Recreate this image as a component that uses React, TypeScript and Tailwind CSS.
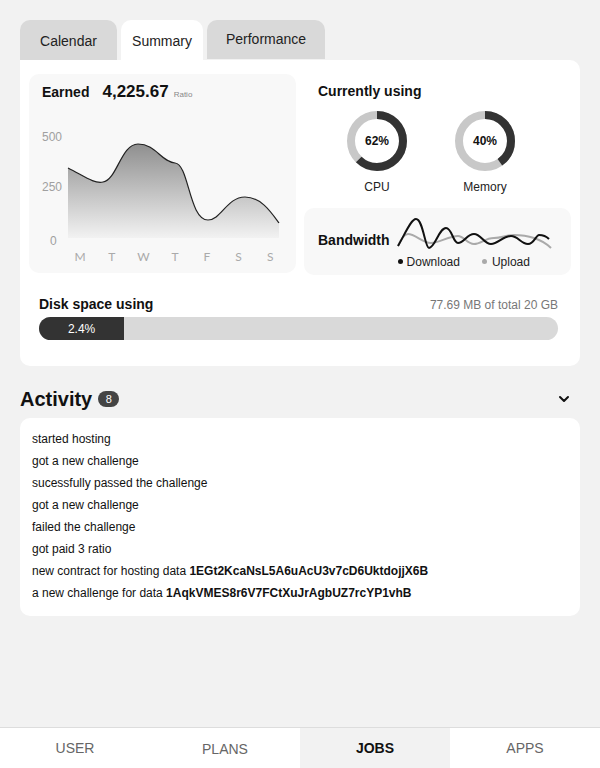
import React from 'react';
import { ChevronDown } from 'lucide-react';

const activity: { text: string; id?: string }[] = [
  { text: 'started hosting' },
  { text: 'got a new challenge' },
  { text: 'sucessfully passed the challenge' },
  { text: 'got a new challenge' },
  { text: 'failed the challenge' },
  { text: 'got paid 3 ratio' },
  { text: 'new contract for hosting data', id: '1EGt2KcaNsL5A6uAcU3v7cD6UktdojjX6B' },
  { text: 'a new challenge for data', id: '1AqkVMES8r6V7FCtXuJrAgbUZ7rcYP1vhB' },
];

const Donut = ({ value, label }: { value: number; label: string }) => {
  const r = 26;
  const c = 2 * Math.PI * r;
  return (
    <div className="w-[80px] flex flex-col items-center">
      <div className="relative w-[62px] h-[62px]">
        <svg width="62" height="62" viewBox="0 0 62 62" className="-rotate-90">
          <circle cx="31" cy="31" r={r} fill="none" stroke="#c8c8c8" strokeWidth="8" />
          <circle
            cx="31"
            cy="31"
            r={r}
            fill="none"
            stroke="#333333"
            strokeWidth="8"
            strokeDasharray={`${(c * value) / 100} ${c}`}
          />
        </svg>
        <div className="absolute inset-0 flex items-center justify-center text-[12px] font-bold text-[#111]">
          {value}%
        </div>
      </div>
      <div className="mt-[9px] text-[12px] leading-none text-[#222]">{label}</div>
    </div>
  );
};

const EarnedChart = () => (
  <svg width="267" height="169" viewBox="0 0 267 169" className="block">
    <defs>
      <linearGradient id="earnFill" x1="0" y1="0" x2="0" y2="1">
        <stop offset="0%" stopColor="#8f8f8f" />
        <stop offset="100%" stopColor="#f2f2f2" />
      </linearGradient>
    </defs>
    <g fontFamily="'Liberation Sans', Arial, sans-serif" fontSize="12" fill="#a0a0a0">
      <text x="13" y="37">500</text>
      <text x="13" y="87">250</text>
      <text x="21" y="141">0</text>
    </g>
    <path
      d="M39,64 C55,72 65,80 74,78 C88,76 92,40 109,40 C127,40 132,58 146,59 C160,60 160,116 179,116 C192,116 198,93 216,93 C232,93 242,108 250,119 L250,134 L39,134 Z"
      fill="url(#earnFill)"
    />
    <path
      d="M39,64 C55,72 65,80 74,78 C88,76 92,40 109,40 C127,40 132,58 146,59 C160,60 160,116 179,116 C192,116 198,93 216,93 C232,93 242,108 250,119"
      fill="none"
      stroke="#222"
      strokeWidth="1.2"
    />
    <g fontFamily="Lato, 'Open Sans', sans-serif" fontSize="12" fill="#aaa" textAnchor="middle">
      {['M', 'T', 'W', 'T', 'F', 'S', 'S'].map((d, i) => (
        <text key={i} x={51 + i * 31.7} y="157">
          {d}
        </text>
      ))}
    </g>
  </svg>
);

const Waves = () => (
  <svg width="156" height="40" viewBox="0 0 156 40" className="block">
    <path
      d="M1,32 C4,25 7,20 11,20 C18,20 26,29 34,29 C42,29 52,22 61,22 C67,22 70,30 77,30 C84,30 88,24 97,24 C105,24 109,21 117,21 C126,21 131,22 137,24 C143,26 150,30 154,34"
      fill="none"
      stroke="#aaaaaa"
      strokeWidth="2"
    />
    <path
      d="M1,32 C8,20 14,5 19,5 C26,5 28,34 32,34 C38,34 42,14 49,14 C55,14 56,29 61,29 C67,29 70,20 77,20 C84,20 87,30 94,30 C101,30 106,22 114,22 C121,22 124,30 131,30 C137,30 139,21 142,21 C147,21 150,23 152,25"
      fill="none"
      stroke="#111"
      strokeWidth="2"
    />
  </svg>
);

const App = () => {
  return (
    <div className="h-screen w-full flex flex-col bg-[#f2f2f2] font-['Liberation_Sans',Arial,sans-serif] text-[#111]">
      <div className="px-5 pt-5">
        {/* tabs */}
        <div className="flex gap-1 text-[14px] text-[#222]">
          <div className="w-[97px] h-10 rounded-t-[10px] bg-[#d9d9d9] flex items-center justify-center pt-[2px]">Calendar</div>
          <div className="w-[82px] h-10 rounded-t-[10px] bg-white flex items-center justify-center pt-[2px]">Summary</div>
          <div className="w-[118px] h-[39px] rounded-t-[10px] bg-[#d9d9d9] flex items-center justify-center">Performance</div>
        </div>

        {/* summary card */}
        <div className="bg-white rounded-b-[10px] rounded-tr-[10px] pt-[14px] pb-[26px]">
          <div className="grid grid-cols-2 gap-2 px-[9px]">
            <div className="bg-[#f8f8f8] rounded-[10px] h-[199px]">
              <div className="flex items-baseline px-[13px] pt-[5px] h-[30px]">
                <span className="text-[14px] font-bold">Earned</span>
                <span className="ml-[13px] text-[17px] font-bold">4,225.67</span>
                <span className="ml-[5px] text-[8px] text-[#888]">Ratio</span>
              </div>
              <EarnedChart />
            </div>

            <div className="flex flex-col">
              <div className="pl-[14px] pt-[9px] text-[14px] font-bold leading-4">Currently using</div>
              <div className="flex gap-[28px] pl-[33px] mt-[11px]">
                <Donut value={62} label="CPU" />
                <Donut value={40} label="Memory" />
              </div>
              <div className="mt-[15px] h-[67px] bg-[#f8f8f8] rounded-[10px] flex items-center pl-[14px]">
                <span className="text-[14px] font-bold -mt-[2px]">Bandwidth</span>
                <div className="ml-[7px] flex flex-col">
                  <Waves />
                  <div className="flex items-center text-[12px] text-[#222] leading-4 pl-[1px]">
                    <span className="w-[5px] h-[5px] rounded-full bg-[#111] mr-[4px]" />
                    <span>Download</span>
                    <span className="w-[5px] h-[5px] rounded-full bg-[#aaa] ml-[22px] mr-[5px]" />
                    <span>Upload</span>
                  </div>
                </div>
              </div>
            </div>
          </div>

          <div className="pl-[19px] pr-[22px] mt-[19px]">
            <div className="flex items-center justify-between">
              <span className="text-[14px] font-bold">Disk space using</span>
              <span className="text-[12px] text-[#777]">77.69 MB of total 20 GB</span>
            </div>
            <div className="mt-[2px] h-[23px] rounded-full bg-[#d9d9d9] overflow-hidden flex">
              <div className="w-[16.4%] h-full bg-[#333] flex items-center justify-center text-[12px] text-white">2.4%</div>
            </div>
          </div>
        </div>

        {/* activity */}
        <div className="flex items-center mt-[21px] h-[24px]">
          <span className="text-[20px] font-bold">Activity</span>
          <span className="ml-[6px] w-[21px] h-[16px] rounded-full bg-[#444] text-white text-[11px] flex items-center justify-center">8</span>
          <ChevronDown className="ml-auto mr-[8px] text-[#111]" size={16} strokeWidth={3} />
        </div>
        <div className="mt-[7px] bg-white rounded-[10px] pt-[10px] pb-[12px] px-3">
          {activity.map((a, i) => (
            <div key={i} className="text-[12px] leading-[22px] text-[#111]">
              {a.text}
              {a.id && <span className="font-bold"> {a.id}</span>}
            </div>
          ))}
        </div>
      </div>

      {/* bottom nav */}
      <div className="mt-auto h-[41px] border-t border-[#dddddd] bg-white grid grid-cols-4 text-[14px]">
        <div className="flex items-center justify-center text-[#666]">USER</div>
        <div className="flex items-center justify-center text-[#666] pt-[2px]">PLANS</div>
        <div className="flex items-center justify-center bg-[#f2f2f2] font-bold text-[#111]">JOBS</div>
        <div className="flex items-center justify-center text-[#666]">APPS</div>
      </div>
    </div>
  );
};

export default App;
